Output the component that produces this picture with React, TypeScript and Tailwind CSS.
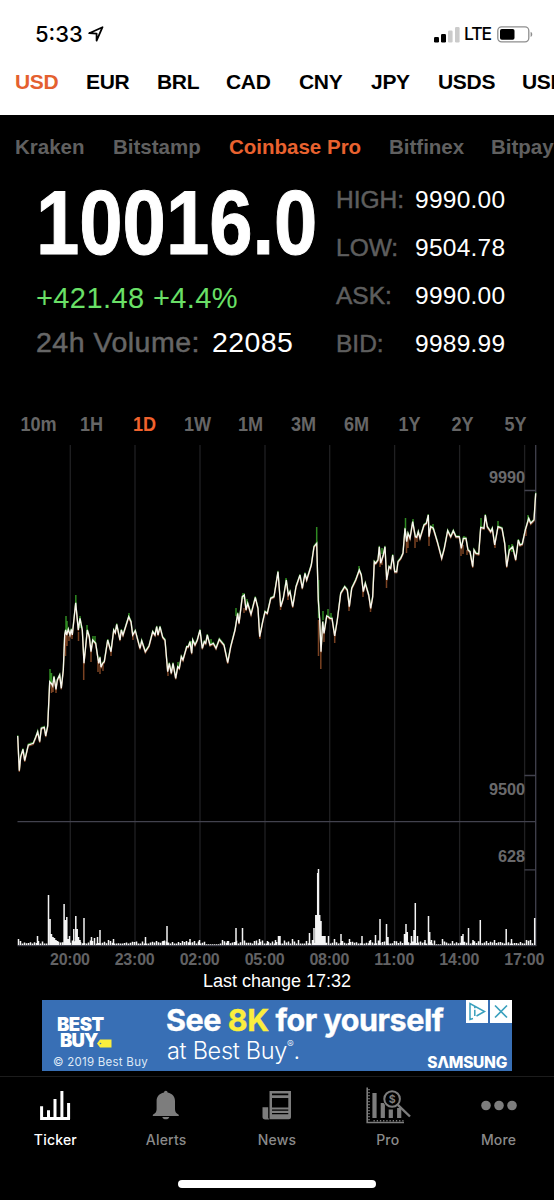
import React from "react";

const SANS = "font-['Liberation_Sans',Arial,sans-serif]";
const UI = "font-['Inter',sans-serif]";

const currencies = [
  ["USD", "w-[71px] text-[#e4602f]"],
  ["EUR", "w-[71px]"],
  ["BRL", "w-[69px]"],
  ["CAD", "w-[73px]"],
  ["CNY", "w-[72px]"],
  ["JPY", "w-[67px]"],
  ["USDS", "w-[84px]"],
  ["USDC", "w-[60px]"],
];

const exchanges = [
  ["Kraken", "w-[98px]"],
  ["Bitstamp", "w-[116px]"],
  ["Coinbase Pro", "w-[160px] text-[#e9622f]"],
  ["Bitfinex", "w-[102px]"],
  ["Bitpay", "w-[70px]"],
];

const stats = [
  ["HIGH:", "9990.00"],
  ["LOW:", "9504.78"],
  ["ASK:", "9990.00"],
  ["BID:", "9989.99"],
];

const periods = ["10m", "1H", "1D", "1W", "1M", "3M", "6M", "1Y", "2Y", "5Y"];

// Price samples in thirds of a pixel; each segment has its own origin.
const early = [
  [53, 468], [58, 572], [62, 530], [69, 508], [74, 542], [85, 495], [100, 490], [107, 472], [113, 455], [119, 485], [124, 445], [133, 442], [137, 468], [143, 438],
  [149, 305], [155, 312], [158, 318], [162, 290], [168, 328], [172, 300], [179, 285], [184, 325], [190, 270], [194, 165], [197, 150], [200, 165], [205, 148], [210, 165],
  [214, 148], [217, 165], [227, 68], [235, 150], [240, 115], [247, 150], [252, 250], [262, 150], [268, 170], [273, 215], [278, 180], [287, 190], [296, 250], [300, 232],
  [303, 262], [308, 250], [313, 245], [323, 180], [333, 215], [341, 150], [346, 158], [350, 133], [360, 180], [364, 150], [369, 165], [386, 110], [393, 125], [398, 165],
  [406, 152], [420, 205], [425, 182], [436, 215], [447, 198], [458, 155], [465, 165], [470, 140], [474, 165], [480, 140], [488, 172], [495, 180], [503, 275], [508, 250],
  [514, 280], [519, 250], [527, 295], [533, 260], [538, 265], [544, 230], [549, 240], [560, 200], [565, 200], [570, 185], [575, 220], [578, 180], [585, 195], [592, 180],
  [600, 150], [607, 205], [613, 185], [617, 190], [622, 165], [630, 195], [640, 190], [648, 205], [658, 178], [672, 195], [683, 248], [692, 200], [705, 150], [713, 100],
  [717, 130], [727, 50], [733, 45], [738, 90], [743, 70], [753, 103], [766, 52], [774, 85], [779, 170], [788, 125], [795, 95], [802, 100], [812, 55], [822, 50],
].map(([x, y]) => [x / 3, 580 + y / 3]);

const late = [
  [12, 515], [20, 620], [28, 595], [37, 540], [43, 585], [48, 575], [56, 620], [66, 560], [78, 525], [85, 565], [93, 520], [98, 540], [112, 495], [120, 440],
  [128, 430], [133, 600], [137, 660], [141, 755], [146, 665], [150, 700], [158, 648], [163, 650], [168, 655], [174, 655], [182, 708], [190, 660], [200, 580], [212, 560],
  [220, 570], [226, 620], [233, 565], [245, 540], [256, 510], [262, 525], [268, 575], [274, 550], [284, 585], [290, 625], [296, 590], [301, 485], [305, 490], [312, 480],
  [316, 440], [320, 490], [328, 465], [333, 440], [338, 540], [345, 500], [350, 505], [356, 465], [362, 515], [368, 515], [372, 485], [380, 475], [387, 460], [393, 385],
  [398, 425], [402, 400], [408, 415], [416, 365], [424, 410], [428, 412], [433, 395], [438, 415], [450, 375], [457, 370], [463, 345], [465, 410], [470, 380], [478, 385],
  [490, 425], [503, 475], [511, 445], [521, 392], [530, 410], [538, 392], [546, 410], [556, 410], [562, 445], [568, 415], [576, 415], [582, 450], [588, 455], [596, 500],
  [600, 450], [606, 460], [614, 462], [620, 382], [630, 385], [634, 345], [640, 380], [650, 395], [655, 385], [662, 435], [672, 380], [684, 385], [692, 430], [698, 500],
  [706, 450], [716, 440], [725, 480], [733, 420], [738, 435], [745, 432], [754, 390], [764, 355], [770, 370], [780, 360], [785, 280],
].map(([x, y]) => [274 + x / 3, 400 + y / 3]);

const price = [...early, ...late];
const line = (dy: number) =>
  price.map(([x, y], i) => `${i ? "L" : "M"}${x.toFixed(1)} ${(y + dy).toFixed(1)}`).join(" ");

// [x, top, bottom]
const highs = [
  [50, 669, 682], [51.5, 673, 683], [66, 616, 632], [67, 621, 632], [75.8, 595, 606], [80, 616, 628], [87, 625, 634], [93, 636, 643], [95, 636, 643], [129, 613, 618],
  [178, 662, 668], [236, 608, 616], [243, 593, 599], [247, 599, 606], [316.7, 527, 545], [318.6, 580, 618], [323, 611, 620], [328, 609, 617], [331, 613, 619], [359, 566, 571],
  [382, 548, 554], [405.5, 518, 530], [413, 519, 525], [433, 524, 530], [481, 518, 527], [498, 521, 528], [509, 545, 553], [512, 544, 552], [528, 515, 522], [286, 578, 586],
  [464, 536, 540], [211, 639, 643], [191, 641, 646],
];
const lows = [
  [51.5, 684, 693], [53, 684, 692], [56, 687, 693], [65.5, 636, 656], [67, 634, 646], [69, 636, 641], [72, 635, 639], [78.5, 632, 641], [83.7, 660, 680], [91, 652, 662],
  [98, 662, 672], [100, 665, 674], [103, 662, 671], [111, 650, 656], [260, 634, 639], [280.5, 604, 610], [288, 595, 600], [318.5, 620, 656], [320.8, 645, 669], [324, 630, 642],
  [334.7, 634, 643], [349, 605, 611], [363, 590, 597], [370.5, 605, 612], [380, 560, 567], [382, 558, 565], [386.5, 578, 588], [406.5, 540, 553], [408, 536, 548], [415, 537, 548],
  [417, 536, 542], [429, 536, 546], [461, 546, 556], [463, 545, 554], [467, 550, 555], [495, 544, 548], [526, 530, 536], [244, 608, 613], [133, 635, 640], [168, 673, 676],
];

// [x, height]
const spikes = [
  [18, 6], [37, 9], [38, 4], [48, 50], [49.6, 26], [51, 11], [52.5, 8], [54, 7], [55.5, 5], [57, 4], [63.6, 41], [65, 25], [66.3, 28], [67.5, 6], [69, 9], [73.3, 16],
  [75.3, 29], [76.7, 16], [78, 8], [79.5, 5], [83.5, 27], [91, 8], [94, 7], [97, 8], [99.5, 15], [108, 5], [110, 4], [113, 6], [145, 8], [156, 4], [162.5, 4], [166.5, 19],
  [189.5, 6], [199, 5], [194, 4], [222, 5], [227, 4], [235.5, 17], [242, 17], [254, 4], [259, 6], [267, 4], [275, 5], [278, 9], [279.5, 9], [292, 6], [298, 5], [309, 12], [312, 5], [313.5, 17],
  [315.3, 30], [316.4, 30], [317.2, 72], [318, 76], [319.2, 30], [320.5, 24], [322, 9], [323, 9], [324.5, 9], [328, 9], [334, 6], [340.5, 11], [349, 6], [361.5, 9], [369, 4], [370, 5], [375, 10],
  [379.5, 26], [386, 21], [387.5, 8], [394, 4], [404, 11], [405.5, 21], [406.8, 13], [411, 9], [414.8, 42], [413.5, 15], [417, 9], [424.5, 5], [428, 29], [429.2, 13], [431, 5], [442, 6], [461, 9], [462.5, 11],
  [468, 17], [472.5, 5], [479.8, 25], [486, 4], [494, 5], [505.7, 16], [511, 6], [526, 5], [530, 5], [534.2, 27],
];
const noise = Array.from({ length: 258 }, (_, i) => {
  const x = 18 + i * 2;
  const quiet = (x > 434 && x < 441) || (x > 204 && x < 219);
  const r = Math.abs(Math.sin(i * 12.9898) * 43758.5453) % 1;
  return [x, quiet ? 0.8 : 1.4 + r * r * 3.2];
});

const ticks: [string, number][] = [
  ["20:00", 70], ["23:00", 134.7], ["02:00", 199.7], ["05:00", 264.7], ["08:00", 329.4], ["11:00", 394.3], ["14:00", 459.3], ["17:00", 524.3],
];

function Chart() {
  return (
    <svg className="block h-[525px] w-[554px]" viewBox="0 445 554 525">
      {ticks.map(([t, x]) => (
        <path key={t} d={`M${x + 0.3} 445V945`} stroke="#202022" strokeWidth="1.3" />
      ))}
      <g stroke="#42424e" strokeWidth="1.3" fill="none">
        <path d="M17.5 821.6H536M17.5 945.6H536.3M524.5 490.5H536M524.5 775.5H536M524.5 869.8H536" />
        <path d="M535.7 445V946" />
      </g>
      <path d={line(-0.9)} fill="none" stroke="#2f7a22" strokeWidth="1.3" />
      <path d={line(1.2)} fill="none" stroke="#7a4222" strokeWidth="1.3" />
      <path d={highs.map(([x, a, b]) => `M${x} ${a}V${b}`).join("")} stroke="#2f8a22" strokeWidth="1.5" />
      <path d={lows.map(([x, a, b]) => `M${x} ${a}V${b}`).join("")} stroke="#7a4222" strokeWidth="1.5" />
      <path d={line(0)} fill="none" stroke="#f6f6f0" strokeWidth="1.35" strokeLinejoin="miter" />
      <path d={[...noise, ...spikes].map(([x, h]) => `M${x + 0.5} 945V${945 - h}`).join("")} stroke="#f4f4f4" strokeWidth="1.5" />
      <g className={SANS} fontSize="16.3" fontWeight="700" fill="#69696b" textAnchor="end">
        <text x="525" y="483" textLength="36">9990</text>
        <text x="525" y="795" textLength="36">9500</text>
        <text x="525" y="862" textLength="27">628</text>
      </g>
      <g className={SANS} fontSize="16" fontWeight="700" fill="#626264" textAnchor="middle">
        {ticks.map(([t, x]) => (
          <text key={t} x={x} y="965" textLength="40">{t}</text>
        ))}
      </g>
    </svg>
  );
}

function TickerIcon() {
  return (
    <svg className="h-[40px] w-[50px]" viewBox="30 1085 50 40">
      <path d="M41.6 1106.3V1119M48.5 1110.3V1119M55 1099V1119M61.9 1091V1119M68.6 1103V1119M40.1 1118.4H70" stroke="#fff" strokeWidth="3" fill="none" />
    </svg>
  );
}

function BellIcon() {
  return (
    <svg className="h-[40px] w-[50px]" viewBox="141 1085 50 40" fill="#7d7d7d">
      <path d="M164 1092.6a1.8 1.8 0 0 1 3.6 0c4.9 1 7.4 4.2 7.4 8.4v8.200c0 2.800 1.200 4 3.400 5.200.800.500.600 1.600-.4 1.600h-24.400c-1 0-1.200-1.100-.4-1.600 2.200-1.200 3.400-2.400 3.400-5.200v-8.200c0-4.200 2.500-7.400 7.400-8.400z" />
      <path d="M162.300 1117h7c-.4 1.400-1.700 2.300-3.500 2.300s-3.100-.9-3.500-2.300z" />
    </svg>
  );
}

function NewsIcon() {
  return (
    <svg className="h-[40px] w-[50px]" viewBox="252 1085 50 40" fill="#7d7d7d">
      <path fillRule="evenodd" d="M269.500 1091H291v26.300a2 2 0 0 1-2 2h-19.500zM272 1093.500v1.700h16.300v-1.700zM272 1098v9.500h16.300v-9.500zM272 1109.500v1.300h16.300v-1.300zM272 1113v1.300h16.300v-1.300z" />
      <path d="M262.500 1107.300h5.700v10.500l1 1.700h-4a2.700 2.700 0 0 1-2.700-2.700z" />
    </svg>
  );
}

function ProIcon() {
  return (
    <svg className="h-[40px] w-[50px]" viewBox="362.500 1085 50 40" fill="none" stroke="#7d7d7d">
      <path d="M366.700 1087.500V1122.500H403.500" strokeWidth="1.600" />
      <path d="M368.500 1089V1121" strokeWidth="1.500" strokeDasharray="1.300 1.700" />
      <path d="M373 1120.800H403" strokeWidth="1.500" strokeDasharray="1.300 1.900" />
      <path d="M374 1093V1118M382.300 1103V1118M390.300 1109.500V1118M398.700 1108V1118" strokeWidth="4.200" />
      <circle cx="391.600" cy="1099" r="9.200" fill="#000" stroke="none" />
      <circle cx="391.600" cy="1099" r="7.800" strokeWidth="2" />
      <path d="M397.300 1104.800L409.500 1116.500" strokeWidth="2.400" />
      <text x="391.700" y="1102.800" textAnchor="middle" className={UI} fontSize="10.500" fontWeight="700" fill="#7d7d7d" stroke="none">$</text>
    </svg>
  );
}

function MoreIcon() {
  return (
    <svg className="h-[40px] w-[50px]" viewBox="473 1085 50 40" fill="#7d7d7d">
      <circle cx="485" cy="1105.500" r="4.800" />
      <circle cx="498" cy="1105.500" r="4.800" />
      <circle cx="511" cy="1105.500" r="4.800" />
    </svg>
  );
}

const nav: [string, () => React.ReactElement][] = [
  ["Ticker", TickerIcon], ["Alerts", BellIcon], ["News", NewsIcon], ["Pro", ProIcon], ["More", MoreIcon],
];

function StatusBar() {
  return (
    <div className={`${UI} flex h-[55px] items-start justify-between pl-[35px] pr-[20px] pt-[20px] text-black`}>
      <div className="flex h-[28px] items-center">
        <span className="w-[53px] text-[22px] font-medium leading-[28px]">5:33</span>
        <svg className="h-[16px] w-[16px]" viewBox="0 0 16 16">
          <path d="M1.200 7.200L14.500 1.200 8.600 14.600V7.600z" fill="none" stroke="#000" strokeWidth="1.800" strokeLinejoin="round" />
        </svg>
      </div>
      <div className="flex h-[28px] items-center">
        <svg className="h-[17px] w-[27px]" viewBox="0 0 27 17">
          <rect x="0" y="11" width="5" height="5.500" rx="1.200" />
          <rect x="7" y="8" width="5" height="8.500" rx="1.200" />
          <rect x="14" y="4.500" width="4.600" height="12" rx="1.200" fill="#cbcbcb" />
          <rect x="21" y="1" width="4.600" height="15.500" rx="1.200" fill="#cbcbcb" />
        </svg>
        <span className="ml-[3px] w-[33px] text-[17.500px] font-medium leading-[28px] tracking-[-1.100px]">LTE</span>
        <svg className="h-[17px] w-[37px]" viewBox="0 0 37 17">
          <rect x=".8" y=".9" width="31" height="15" rx="3.800" fill="none" stroke="#8e8e8e" strokeWidth="1.300" />
          <rect x="3" y="3" width="14.500" height="10.800" rx="1.800" />
          <path d="M33.600 5.800c2.200.8 2.200 4.400 0 5.200z" fill="#8e8e8e" />
        </svg>
      </div>
    </div>
  );
}

function Ad() {
  return (
    <div className="relative ml-[42px] flex h-[71px] w-[470px] shrink-0 overflow-hidden bg-[#386fb5] text-white">
      <div className="w-[124px] pt-[16px] font-['Inter',sans-serif]">
        <div className="ml-[15px] text-[18.500px] font-black leading-[16px] tracking-[-0.500px]">BEST</div>
        <div className="ml-[18px] flex text-[18.500px] font-black leading-[16px] tracking-[-0.800px]">
          BUY
          <svg className="-ml-[1px] mt-[7px] h-[9px] w-[15px]" viewBox="0 0 15 9">
            <path d="M0 4.500L3 .5H14.500V8.500H3z" fill="#fbee3d" />
            <circle cx="3.500" cy="4.500" r=".8" fill="#386fb5" />
          </svg>
        </div>
        <div className="ml-[11px] mt-[7px] whitespace-nowrap text-[11.500px] leading-[14px] tracking-[0.250px] text-[#dfe9f6]">© 2019 Best Buy</div>
      </div>
      <div className="whitespace-nowrap pt-[2px] font-['Inter',sans-serif]">
        <div className="text-[30.500px] font-bold leading-[35px] tracking-[-0.450px] [-webkit-text-stroke:0.400px_currentColor]">
          See <span className="text-[#fbee3d]">8K</span> for yourself
        </div>
        <div className="ml-[1px] flex text-[23.500px] font-light leading-[27px] tracking-[-0.300px]">
          <span>at Best Buy</span>
          <span className="text-[10px] leading-[14px]">®</span>
          <span>.</span>
        </div>
      </div>
      <div className="absolute bottom-0 right-[5px] font-['Inter',sans-serif] text-[15.500px] font-extrabold leading-[17px] tracking-[-0.300px]">S&Lambda;MSUNG</div>
      <div className="absolute right-0 top-0 flex gap-[2px]">
        <svg className="h-[23px] w-[22px] bg-white" viewBox="0 0 22 23" fill="none" stroke="#3aa0bd" strokeWidth="1.500">
          <path d="M7 18.500L4 19.500V3.500L18.500 11.500 10.500 16M8.800 9.800V16M8.800 6.500V8.300" />
        </svg>
        <svg className="h-[23px] w-[22px] bg-white" viewBox="0 0 22 23" fill="none" stroke="#3aa0bd" strokeWidth="1.700">
          <path d="M5 5.500L17 17.500M17 5.500L5 17.500" />
        </svg>
      </div>
    </div>
  );
}

export default function App() {
  return (
    <div className={`${SANS} flex h-[1200px] w-[554px] flex-col overflow-hidden bg-black text-white`}>
      <header className="h-[115px] shrink-0 bg-white">
        <StatusBar />
        <nav className="flex h-[54px] items-center overflow-hidden pl-[15px] text-[21px] font-bold tracking-[-0.300px] text-black">
          {currencies.map(([c, cls]) => (
            <span key={c} className={`shrink-0 whitespace-nowrap ${cls}`}>{c}</span>
          ))}
        </nav>
      </header>

      <nav className="flex h-[65px] shrink-0 items-center overflow-hidden pl-[15px] text-[20.500px] font-bold text-[#606060]">
        {exchanges.map(([e, cls]) => (
          <span key={e} className={`shrink-0 whitespace-nowrap ${cls}`}>{e}</span>
        ))}
      </nav>

      <section className="flex h-[230px] shrink-0">
        <div className="w-[336px] pl-[36px]">
          <div className="h-[96px] origin-left scale-x-[0.865] whitespace-nowrap text-[90px] font-bold leading-[86px] [-webkit-text-stroke:1px_#fff]">10016.0</div>
          <div className="h-[44px] whitespace-nowrap text-[29px] leading-[45px] tracking-[0.400px] text-[#6ae067]">+421.48 +4.4%</div>
          <div className="flex h-[44px] whitespace-nowrap text-[28.500px] leading-[45px]">
            <span className="w-[176px] tracking-[0.500px] text-[#666] [-webkit-text-stroke:0.500px_#666]">24h Volume:</span>
            <span className="tracking-[0.400px]">22085</span>
          </div>
        </div>
        <div className="flex flex-col">
          {stats.map(([k, v]) => (
            <div key={k} className="flex h-[48px] text-[24.500px] leading-[40px]">
              <span className="w-[79px] text-[#5e5e5e] [-webkit-text-stroke:0.500px_#5e5e5e]">{k}</span>
              <span className="tracking-[0.250px]">{v}</span>
            </div>
          ))}
        </div>
      </section>

      <nav className="ml-[11.500px] grid h-[35px] w-[530px] shrink-0 grid-cols-10 text-center text-[21px] font-bold leading-[27px] text-[#666]">
        {periods.map((p) => (
          <span key={p} className={`scale-x-[0.86] ${p === "1D" ? "text-[#f0622d]" : ""}`}>{p}</span>
        ))}
      </nav>

      <main className="h-[525px] shrink-0">
        <Chart />
      </main>
      <div className="h-[30px] shrink-0 text-center text-[18px] leading-[22px]">Last change 17:32</div>
      <Ad />

      <footer className="mt-[5px] h-[124px] shrink-0 border-t border-[#1c1c1c]">
        <div className="flex pt-[8px]">
          {nav.map(([label, Icon], i) => (
            <div key={label} className={`${UI} flex w-[110.800px] flex-col items-center text-[14px] font-medium leading-[18px] tracking-[0.200px] ${i === 0 ? "text-white" : "text-[#8a8a8a]"}`}>
              <Icon />
              <span className="mt-[6px]">{label}</span>
            </div>
          ))}
        </div>
        <div className="mx-auto mt-[31px] h-[8px] w-[198px] rounded-full bg-white" />
      </footer>
    </div>
  );
}
